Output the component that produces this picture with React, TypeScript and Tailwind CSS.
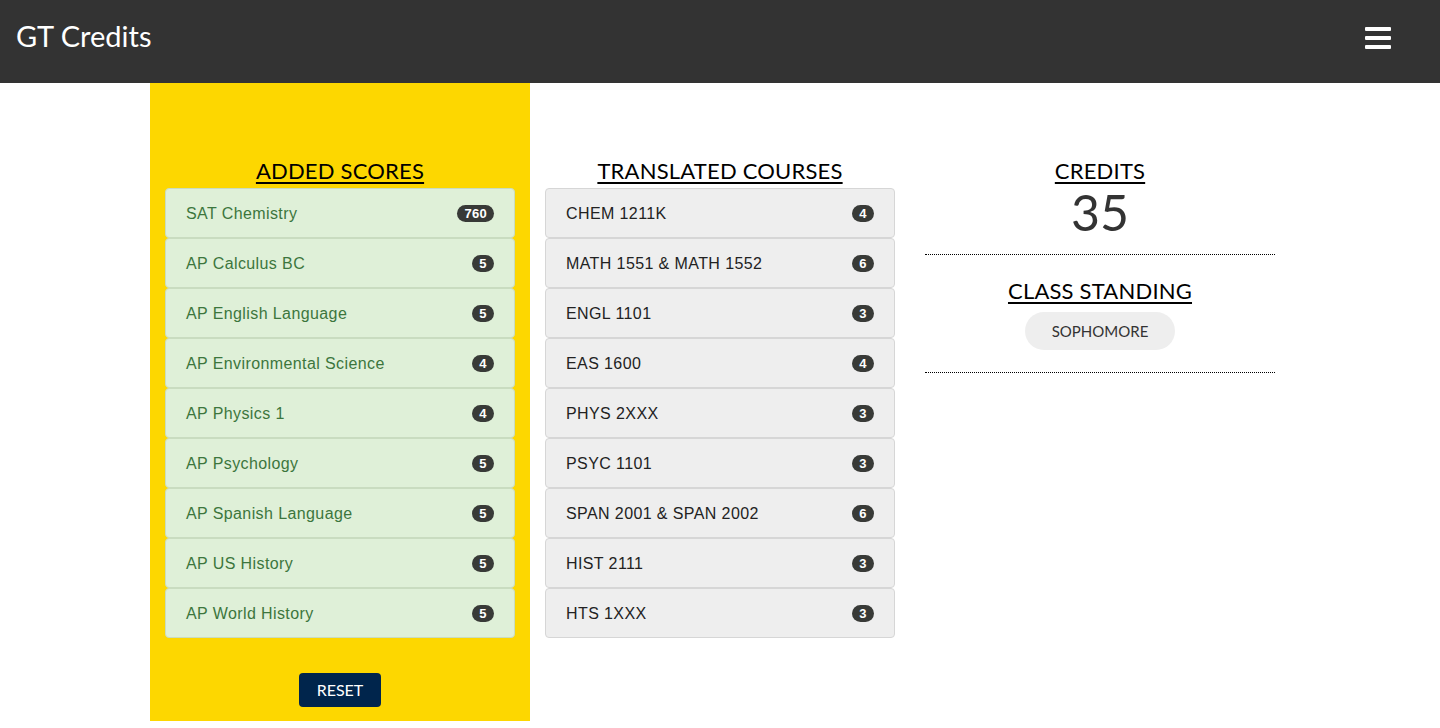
const scores = [
  { name: "SAT Chemistry", score: "760" },
  { name: "AP Calculus BC", score: "5" },
  { name: "AP English Language", score: "5" },
  { name: "AP Environmental Science", score: "4" },
  { name: "AP Physics 1", score: "4" },
  { name: "AP Psychology", score: "5" },
  { name: "AP Spanish Language", score: "5" },
  { name: "AP US History", score: "5" },
  { name: "AP World History", score: "5" },
];

const courses = [
  { name: "CHEM 1211K", credits: "4" },
  { name: "MATH 1551 & MATH 1552", credits: "6" },
  { name: "ENGL 1101", credits: "3" },
  { name: "EAS 1600", credits: "4" },
  { name: "PHYS 2XXX", credits: "3" },
  { name: "PSYC 1101", credits: "3" },
  { name: "SPAN 2001 & SPAN 2002", credits: "6" },
  { name: "HIST 2111", credits: "3" },
  { name: "HTS 1XXX", credits: "3" },
];

const heading = "font-['Lato',sans-serif] text-[22px] leading-[24px] text-black underline underline-offset-[3px] decoration-[2px] text-center tracking-[0.2px]";

function Badge({ value }: { value: string }) {
  return (
    <span className="inline-flex h-[17px] min-w-[22px] items-center justify-center rounded-full bg-[#383a37] px-[7px] font-['Liberation_Sans',sans-serif] text-[13px] font-bold tracking-[0.3px] text-white">
      {value}
    </span>
  );
}

export default function App() {
  return (
    <div className="min-h-screen bg-white font-['Liberation_Sans',sans-serif]">
      <header className="flex h-[83px] items-center justify-between bg-[#333333] pl-4 pr-[49px]">
        <span className="pb-[12px] font-['Lato',sans-serif] text-[29px] text-white">GT Credits</span>
        <button className="flex flex-col gap-[5px] pb-[8px]">
          <span className="block h-[4px] w-[26px] rounded-[1px] bg-white" />
          <span className="block h-[4px] w-[26px] rounded-[1px] bg-white" />
          <span className="block h-[4px] w-[26px] rounded-[1px] bg-white" />
        </button>
      </header>

      <main className="flex justify-center">
        <section className="flex h-[638px] w-[380px] flex-col bg-[#fdd700] px-[15px] pt-[76px]">
          <h2 className={heading}>ADDED SCORES</h2>
          <ul className="mt-[5px] flex flex-col">
            {scores.map((s) => (
              <li
                key={s.name}
                className="flex h-[50px] items-center justify-between rounded-[4px] border border-[#c9dcc0] bg-[#dff0d8] px-[20px] pt-[1px] text-[16px] tracking-[0.4px] text-[#3c763d]"
              >
                <span>{s.name}</span>
                <Badge value={s.score} />
              </li>
            ))}
          </ul>
          <div className="mt-[35px] flex justify-center">
            <button className="h-[34px] w-[82px] rounded-[4px] bg-[#00254c] font-['Lato',sans-serif] text-[16px] text-white">
              RESET
            </button>
          </div>
        </section>

        <section className="w-[380px] px-[15px] pt-[76px]">
          <h2 className={heading}>TRANSLATED COURSES</h2>
          <ul className="mt-[5px] flex flex-col">
            {courses.map((c) => (
              <li
                key={c.name}
                className="flex h-[50px] items-center justify-between rounded-[4px] border border-[#d6d6d6] bg-[#eeeeee] px-[20px] pt-[1px] text-[16px] tracking-[0.4px] text-[#222222]"
              >
                <span>{c.name}</span>
                <Badge value={c.credits} />
              </li>
            ))}
          </ul>
        </section>

        <section className="w-[380px] px-[15px] pt-[76px]">
          <h2 className={heading}>CREDITS</h2>
          <div className="mt-[4px] text-center font-['Lato',sans-serif] text-[50px] font-normal leading-[50px] text-[#333333]">
            35
          </div>
          <hr className="mt-[17px] border-0 border-t border-dotted border-black" />
          <h2 className={`${heading} mt-[24px]`}>CLASS STANDING</h2>
          <div className="mt-[9px] flex justify-center">
            <span className="flex h-[38px] w-[150px] items-center justify-center rounded-full bg-[#eeeeee] font-['Lato',sans-serif] text-[15px] text-[#333333]">
              SOPHOMORE
            </span>
          </div>
          <hr className="mt-[22px] border-0 border-t border-dotted border-black" />
        </section>
      </main>
    </div>
  );
}
